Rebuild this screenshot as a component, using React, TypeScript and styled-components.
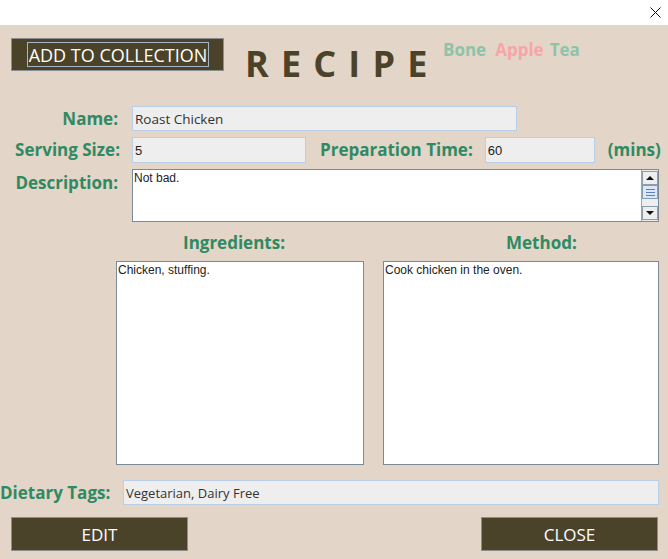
import styled, { createGlobalStyle } from "styled-components";

const Global = createGlobalStyle`
  html, body { margin: 0; padding: 0; }
  body { font-family: "Open Sans", "Liberation Sans", sans-serif; background: #fff; }
`;

const Window = styled.div`
  width: 668px;
  height: 559px;
  display: flex;
  flex-direction: column;
  overflow: hidden;
`;

const TitleBar = styled.div`
  height: 25px;
  flex-shrink: 0;
  background: #fff;
  display: flex;
  justify-content: flex-end;
  align-items: flex-start;
  padding-right: 7px;
  box-sizing: border-box;
`;

const CloseX = styled.svg`
  margin-top: 7px;
`;

const Body = styled.div`
  flex: 1;
  background: #e4d5c9;
  display: flex;
  flex-direction: column;
`;

const Header = styled.div`
  display: flex;
  align-items: flex-start;
  height: 33px;
  margin-top: 13px;
  padding-left: 11px;
`;

const DarkButton = styled.button<{ $w: number; $h: number; $fs?: number }>`
  width: ${(p) => p.$w}px;
  height: ${(p) => p.$h}px;
  background: #4b4329;
  border: 1px solid #8b8d8f;
  color: #fff;
  font-family: "Open Sans", sans-serif;
  font-size: ${(p) => p.$fs || 17}px;
  font-weight: 400;
  padding: 0;
  display: flex;
  align-items: center;
  justify-content: center;
  box-sizing: border-box;
  flex-shrink: 0;
  cursor: pointer;
`;

const FocusRing = styled.span`
  width: 182px;
  height: 25px;
  border: 1px solid #a7b6c6;
  box-sizing: border-box;
  display: flex;
  align-items: center;
  justify-content: center;
  margin-left: 1px;
`;

const Title = styled.div`
  width: 198px;
  margin-left: 21px;
  margin-top: 8px;
  font-size: 36px;
  line-height: 36px;
  font-weight: 700;
  letter-spacing: 1.4px;
  color: #4b4329;
  white-space: pre;
  flex-shrink: 0;
`;

const Tags = styled.div`
  display: flex;
  margin-top: 3px;
  font-size: 17px;
  line-height: 17px;
  font-weight: 700;
`;

const Tag = styled.span<{ $c: string; $gap: number }>`
  color: ${(p) => p.$c};
  margin-right: ${(p) => p.$gap}px;
`;

const Row = styled.div<{ $mt: number; $pl?: number; $align?: string }>`
  display: flex;
  align-items: ${(p) => p.$align || "center"};
  margin-top: ${(p) => p.$mt}px;
  padding-left: ${(p) => (p.$pl ?? 11)}px;
`;

const Label = styled.label<{ $w?: number; $ml?: number; $pt?: number }>`
  ${(p) => (p.$w ? `width: ${p.$w}px; text-align: right;` : "")}
  margin-left: ${(p) => p.$ml || 0}px;
  padding-top: ${(p) => p.$pt || 0}px;
  color: #2f8a62;
  font-size: 17px;
  font-weight: 700;
  line-height: 22px;
  white-space: nowrap;
  flex-shrink: 0;
`;

const Field = styled.div<{ $w: number; $h: number; $ml: number; $fs?: number }>`
  width: ${(p) => p.$w}px;
  height: ${(p) => p.$h}px;
  margin-left: ${(p) => p.$ml}px;
  background: #eeeeee;
  border: 1px solid #b8cfe5;
  box-sizing: border-box;
  display: flex;
  align-items: center;
  padding-left: 2px;
  font-size: ${(p) => p.$fs || 13.5}px;
  color: #333;
  flex-shrink: 0;
`;

const NumField = styled(Field)`
  font-family: "Liberation Sans", sans-serif;
  font-size: 13px;
  color: #222;
`;

const TextBox = styled.div<{ $w: number; $h: number; $ml?: number }>`
  width: ${(p) => p.$w}px;
  height: ${(p) => p.$h}px;
  margin-left: ${(p) => p.$ml || 0}px;
  background: #fff;
  border: 1px solid #7a8a99;
  box-sizing: border-box;
  display: flex;
  flex-shrink: 0;
  font-family: "Liberation Sans", Arial, sans-serif;
  font-size: 12px;
  line-height: 14px;
  color: #222;
`;

const TextContent = styled.div`
  flex: 1;
  padding: 1px 0 0 1px;
`;

const ScrollBar = styled.div`
  width: 16px;
  display: flex;
  flex-direction: column;
  background: #eeeeee;
  border-left: 1px solid #9aa6b2;
  padding: 1px 0;
`;

const ScrollBtn = styled.div`
  height: 14px;
  border: 1px solid #8e9ba8;
  background: #eeeeee;
  display: flex;
  align-items: center;
  justify-content: center;
  box-sizing: border-box;
`;

const Arrow = styled.span<{ $down?: boolean }>`
  width: 0;
  height: 0;
  border-left: 4px solid transparent;
  border-right: 4px solid transparent;
  ${(p) =>
    p.$down
      ? "border-top: 4px solid #111;"
      : "border-bottom: 4px solid #111;"}
`;

const Thumb = styled.div`
  height: 14px;
  border: 1px solid #7f9db9;
  background: #dce7f5;
  box-sizing: border-box;
  display: flex;
  flex-direction: column;
  justify-content: center;
  align-items: center;
  gap: 2px;
`;

const Grip = styled.span`
  width: 9px;
  height: 1px;
  background: #5b7fb8;
`;

const Track = styled.div`
  flex: 1;
`;

const Columns = styled.div<{ $mt: number }>`
  display: grid;
  grid-template-columns: 248px 276px;
  column-gap: 19px;
  padding-left: 116px;
  margin-top: ${(p) => p.$mt}px;
`;

const Footer = styled.div`
  display: flex;
  justify-content: space-between;
  margin-top: 12px;
  padding: 0 10px 0 11px;
`;

export default function App() {
  return (
    <Window>
      <Global />
      <TitleBar>
        <CloseX width="11" height="11" viewBox="0 0 11 11">
          <path d="M0.5 0.5 L10.5 10.5 M10.5 0.5 L0.5 10.5" stroke="#111" strokeWidth="1" />
        </CloseX>
      </TitleBar>
      <Body>
        <Header>
          <DarkButton $w={213} $h={33} $fs={18}>
            <FocusRing>ADD TO COLLECTION</FocusRing>
          </DarkButton>
          <Title>R E C I P E</Title>
          <Tags>
            <Tag $c="#8dc3a6" $gap={9}>Bone</Tag>
            <Tag $c="#f6a6a6" $gap={6}>Apple</Tag>
            <Tag $c="#8dc3a6" $gap={0}>Tea</Tag>
          </Tags>
        </Header>

        <Row $mt={35}>
          <Label $w={107}>Name:</Label>
          <Field $w={385} $h={25} $ml={14}>Roast Chicken</Field>
        </Row>

        <Row $mt={6}>
          <Label $w={109}>Serving Size:</Label>
          <NumField $w={174} $h={26} $ml={12}>5</NumField>
          <Label $ml={14}>Preparation Time:</Label>
          <NumField $w={110} $h={26} $ml={12}>60</NumField>
          <Label $ml={13}>(mins)</Label>
        </Row>

        <Row $mt={6} $align="flex-start">
          <Label $w={107} $pt={3}>Description:</Label>
          <TextBox $w={527} $h={53} $ml={14}>
            <TextContent>Not bad.</TextContent>
            <ScrollBar>
              <ScrollBtn><Arrow /></ScrollBtn>
              <Thumb><Grip /><Grip /><Grip /></Thumb>
              <Track />
              <ScrollBtn><Arrow $down /></ScrollBtn>
            </ScrollBar>
          </TextBox>
        </Row>

        <Columns $mt={10}>
          <Label $ml={67}>Ingredients:</Label>
          <Label $ml={123}>Method:</Label>
        </Columns>

        <Columns $mt={7}>
          <TextBox $w={248} $h={204}>
            <TextContent>Chicken, stuffing.</TextContent>
          </TextBox>
          <TextBox $w={276} $h={204}>
            <TextContent>Cook chicken in the oven.</TextContent>
          </TextBox>
        </Columns>

        <Row $mt={15} $pl={0}>
          <Label $w={110}>Dietary Tags:</Label>
          <Field $w={536} $h={25} $ml={13} $fs={13}>Vegetarian, Dairy Free</Field>
        </Row>

        <Footer>
          <DarkButton $w={177} $h={34}>EDIT</DarkButton>
          <DarkButton $w={177} $h={34}>CLOSE</DarkButton>
        </Footer>
      </Body>
    </Window>
  );
}
